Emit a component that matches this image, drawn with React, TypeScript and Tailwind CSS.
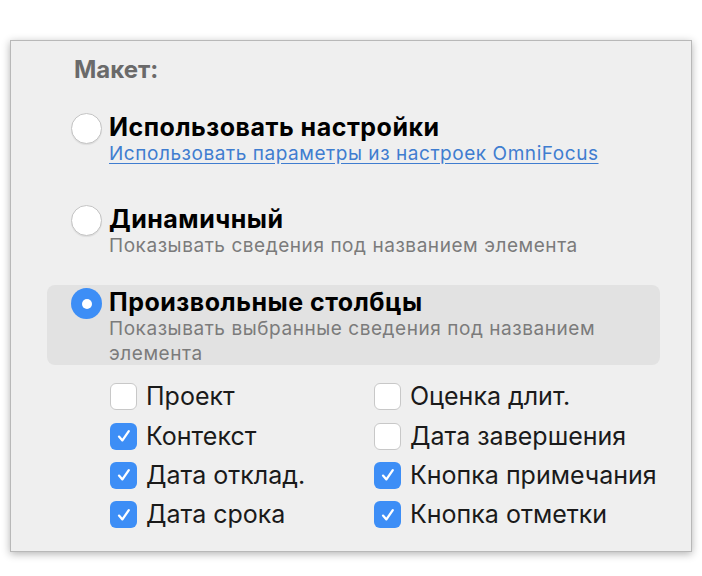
import React from 'react';

const LEFT = [
  { label: 'Проект', checked: false },
  { label: 'Контекст', checked: true },
  { label: 'Дата отклад.', checked: true },
  { label: 'Дата срока', checked: true },
];

const RIGHT = [
  { label: 'Оценка длит.', checked: false },
  { label: 'Дата завершения', checked: false },
  { label: 'Кнопка примечания', checked: true },
  { label: 'Кнопка отметки', checked: true },
];

function Radio({ selected }: { selected?: boolean }) {
  if (selected) {
    return (
      <div className="w-[31px] h-[31px] rounded-full bg-[#3d8ef6] flex items-center justify-center shrink-0">
        <div className="w-[10px] h-[10px] rounded-full bg-white" />
      </div>
    );
  }
  return <div className="w-[31px] h-[31px] rounded-full bg-white border border-[#c4c4c4] shadow-[0_1px_1px_rgba(0,0,0,0.08)] shrink-0" />;
}

function Check({ label, checked }: { label: string; checked: boolean }) {
  return (
    <div className="flex items-center h-[39.4px]">
      {checked ? (
        <div className="w-[27px] h-[27px] rounded-[6px] bg-[#3d8ef6] flex items-center justify-center shrink-0">
          <svg width="18" height="18" viewBox="0 0 18 18" fill="none">
            <path d="M4 9.6 L7.4 13.4 L13.8 4.2" stroke="white" strokeWidth="2.3" strokeLinecap="round" strokeLinejoin="round" />
          </svg>
        </div>
      ) : (
        <div className="w-[27px] h-[27px] rounded-[6px] bg-white border border-[#c8c8c8] shrink-0" />
      )}
      <span className="ml-[9px] text-[25px] leading-none text-[#1a1a1a]">{label}</span>
    </div>
  );
}

export default function App() {
  return (
    <div className="w-[702px] h-[576px] bg-white pt-[40px] pl-[10px] font-['Inter',sans-serif]">
      <div className="w-[682px] h-[512px] bg-[#efefef] border border-[#b8b8b8] shadow-[0_2px_8px_rgba(0,0,0,0.3)] pt-[16px]">
        <div className="pl-[63px] text-[24px] leading-[26px] font-bold text-[#6a6a6a]">Макет:</div>

        <div className="flex mt-[30px] pl-[60px]">
          <Radio />
          <div className="ml-[7px]">
            <div className="text-[25px] leading-[28px] font-bold text-black tracking-[0.5px]">Использовать настройки</div>
            <div className="text-[19px] leading-[25px] text-[#3f7dd0] tracking-[0.55px] underline underline-offset-[3px]">Использовать параметры из настроек OmniFocus</div>
          </div>
        </div>

        <div className="flex mt-[39px] pl-[60px]">
          <Radio />
          <div className="ml-[7px]">
            <div className="text-[25px] leading-[28px] font-bold text-black tracking-[0.5px]">Динамичный</div>
            <div className="text-[19px] leading-[25px] text-[#7b7b7b] tracking-[0.55px]">Показывать сведения под названием элемента</div>
          </div>
        </div>

        <div className="flex mt-[27px] ml-[36px] w-[613px] h-[80px] rounded-[8px] bg-[#e2e2e2] pt-[3px] pl-[24px]">
          <Radio selected />
          <div className="ml-[7px] w-[540px]">
            <div className="text-[25px] leading-[28px] font-bold text-black tracking-[0.5px]">Произвольные столбцы</div>
            <div className="text-[19px] leading-[25px] text-[#7b7b7b] tracking-[0.55px]">Показывать выбранные сведения под названием элемента</div>
          </div>
        </div>

        <div className="grid grid-cols-[264px_1fr] pl-[99px] mt-[12px]">
          <div className="flex flex-col">
            {LEFT.map(i => <Check key={i.label} {...i} />)}
          </div>
          <div className="flex flex-col">
            {RIGHT.map(i => <Check key={i.label} {...i} />)}
          </div>
        </div>
      </div>
    </div>
  );
}
